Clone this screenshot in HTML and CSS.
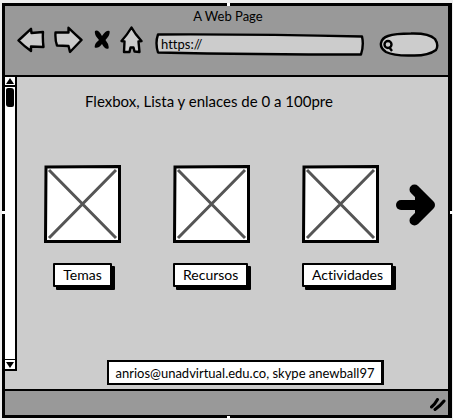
FILE: index.html
```html
<!DOCTYPE html>
<html lang="es">
<head>
<meta charset="utf-8">
<title>A Web Page</title>
<link rel="stylesheet" href="styles.css">
</head>
<body>
<div class="window">
  <header class="chrome">
    <div class="title">A Web Page</div>
    <div class="toolbar">
      <nav class="tools">
        <button class="tool" aria-label="Back"><svg width="28" height="26" viewBox="0 0 28 26"><path class="shape" d="M1.5 13.500 L14 1.800 L14.500 6 L26 5 Q25.500 12 26.500 20 L14 19.500 L14 24 Q7 19 1.500 13.500Z"/></svg></button>
        <button class="tool" aria-label="Forward"><svg width="29" height="28" viewBox="0 0 29 28"><path class="shape" d="M1.500 6.500 L14.500 6.500 L14.500 1.800 Q21 8 27.500 14 L16 26 L14.500 20 L3 19.500 Q1 14 1.500 6.500Z"/></svg></button>
        <button class="tool tool-stop" aria-label="Stop"><svg width="17" height="20" viewBox="0 0 17 20"><path d="M1 1 Q4 -1 8 6 Q12 0 15.500 1 Q16.500 5 11.500 10 Q15.500 15 14.500 18.500 Q11 20 8 14 Q4 19 .8 17.500 Q0 14 5 10 Q0 5 1 1Z"/></svg></button>
        <button class="tool" aria-label="Home"><svg width="23" height="28" viewBox="0 0 23 28"><path class="shape" d="M1.500 15 Q7 9 11.500 1.500 Q15 8 21.500 15 L18.500 15.500 L19.500 26 L14.500 25.500 L13.500 21.500 L10.500 21.500 L9.500 26 L4 26 L4.500 15.500Z"/></svg></button>
      </nav>
      <label class="address"><svg class="sketch" viewBox="0 0 210 23" preserveAspectRatio="none"><path class="shape" d="M3 1.500 Q100 1 207 3.500 Q209 12 206 21.500 Q100 21.500 3 19.500 Q0 10 3 1.500Z"/></svg><input class="address-input" type="text" value="https://" aria-label="Address"></label>
      <label class="search"><svg class="sketch" viewBox="0 0 60 25" preserveAspectRatio="none"><path class="shape" d="M9 4 Q16 1.500 32 1.500 Q50 1 56 7 Q60 13 57 18 Q49 24 33 23.500 Q15 24 7 20 Q1 16 2 11 Q3 6 9 4Z"/><g class="lens"><circle cx="9" cy="12.500" r="3.500"/><path d="M10 15 L13 19"/></g></svg><input class="search-input" type="search" aria-label="Search"></label>
    </div>
  </header>
  <div class="viewport">
    <div class="scrollbar">
      <button class="scroll-button" aria-label="Scroll up"><svg width="8" height="6" viewBox="0 0 8 6"><path d="M4 0 L8 6 H0Z"/></svg></button>
      <div class="track"><div class="thumb"></div></div>
      <button class="scroll-button scroll-down" aria-label="Scroll down"><svg width="8" height="6" viewBox="0 0 8 6"><path d="M0 0 H8 L4 6Z"/></svg></button>
    </div>
    <main class="page">
      <h1 class="heading">Flexbox, Lista y enlaces de 0 a 100pre</h1>
      <div class="gallery">
        <ul class="cards">
          <li class="card card-centered"><svg class="picture" viewBox="0 0 77 78"><path class="frame" d="M2 2 L75.500 1.500 V76.500 H1.500Z"/><path class="cross" d="M5 5 L72 73 M72 5 L5 73"/></svg><a class="label" href="#temas">Temas</a></li>
          <li class="card"><svg class="picture" viewBox="0 0 77 78"><path class="frame" d="M2 2 L75.500 1.500 V76.500 H1.500Z"/><path class="cross" d="M5 5 L72 73 M72 5 L5 73"/></svg><a class="label" href="#recursos">Recursos</a></li>
          <li class="card"><svg class="picture" viewBox="0 0 77 78"><path class="frame" d="M2 2 L75.500 1.500 V76.500 H1.500Z"/><path class="cross" d="M5 5 L72 73 M72 5 L5 73"/></svg><a class="label" href="#actividades">Actividades</a></li>
        </ul>
        <button class="next" aria-label="Siguiente"><svg width="40" height="42" viewBox="0 0 40 42"><path class="next-shaft" d="M5 21 H32"/><path class="next-head" d="M18.500 5.500 L34 21 L18.500 36.500"/><path d="M19 12 L34 21 L19 30Z"/></svg></button>
      </div>
      <footer class="contact">anrios@unadvirtual.edu.co, skype anewball97</footer>
    </main>
  </div>
  <div class="status"><svg width="16" height="13" viewBox="0 0 16 13"><path class="grip" d="M1.500 9 Q5 6 7.500 1.500 M5 11.500 Q10 8 14 3"/></svg></div>
  <i class="handle handle-top"></i><i class="handle handle-right"></i><i class="handle handle-bottom"></i><i class="handle handle-left"></i>
</div>
</body>
</html>
```
FILE: styles.css
```css
* { box-sizing: border-box; }
body {
  margin: 0;
  padding: 3px 1px 2px 2px;
  min-height: 100vh;
  display: flex;
  background: #eee;
  color: #000;
  font: 13px/16px Lato, "Noto Sans", sans-serif;
  font-variant-ligatures: none;
}
svg { display: block; }
button { padding: 0; border: 0; background: none; }
.window {
  position: relative;
  flex: 1;
  min-width: 0;
  display: flex;
  flex-direction: column;
  border: 3px solid #000;
  border-right-width: 4px;
  background: #ccc;
}
.chrome {
  padding: 2px 9px 19px 12px;
  border-bottom: 2px solid #000;
  background: #999;
}
.title { text-align: center; }
.toolbar { display: flex; align-items: center; height: 32px; }
.tools { display: flex; align-items: center; gap: 9px; }
.tool-stop { margin-left: 2px; }
.shape { fill: #ccc; stroke: #000; stroke-width: 2.4; stroke-linejoin: round; }
.address, .search { position: relative; display: flex; }
.address { flex: 1; min-width: 0; height: 23px; margin: 8px 14px 0 12px; }
.search { width: 60px; height: 25px; margin-top: 8px; }
.sketch { position: absolute; inset: 0; width: 100%; height: 100%; }
.address-input, .search-input {
  position: relative;
  width: 100%;
  min-width: 0;
  border: 0;
  padding: 0 6px;
  background: none;
  font: inherit;
  appearance: none;
}
.search-input { padding-left: 20px; }
.lens { fill: none; stroke: #000; stroke-width: 2.4; }
.viewport { flex: 1; display: flex; }
.scrollbar {
  width: 10px;
  margin-bottom: 18px;
  display: flex;
  flex-direction: column;
  border-right: 2px solid #000;
  border-bottom: 2px solid #000;
  box-sizing: content-box;
  background: #fff;
}
.scroll-button {
  height: 10px;
  display: flex;
  align-items: center;
  justify-content: center;
  border-bottom: 2px solid #000;
}
.scroll-down { border-bottom: 0; border-top: 1px solid #000; }
.track { flex: 1; padding: 1px; }
.thumb { width: 8px; height: 19px; border-radius: 2px 3px 2px 3px; background: #000; }
.page { flex: 1; min-width: 0; display: flex; flex-direction: column; }
.heading {
  margin: 14px 0 0 68px;
  font-size: 15px;
  line-height: 20px;
  font-weight: 400;
}
.gallery { display: flex; justify-content: space-between; margin: 54px 12px 0 27px; }
.cards { display: flex; gap: 52px; margin: 0; padding: 0; list-style: none; }
.card { width: 77px; display: flex; flex-direction: column; align-items: flex-start; gap: 20px; }
.card-centered { align-items: center; }
.picture { width: 77px; height: 78px; }
.frame { fill: #fff; stroke: #000; stroke-width: 3; }
.cross { stroke: #555; stroke-width: 3; }
.label {
  padding: 2px 8px;
  border: 2px solid #000;
  border-radius: 1px;
  background: #fff;
  box-shadow: 3px 3px #000;
  color: inherit;
  font-size: 14px;
  text-decoration: none;
  white-space: nowrap;
}
.next { align-self: flex-start; margin-top: 19px; }
.next-shaft, .next-head { fill: none; stroke: #000; stroke-width: 10; stroke-linecap: round; stroke-linejoin: round; }
.contact {
  align-self: center;
  margin: auto 0 4px 26px;
  padding: 3px 6px 2px;
  border: 2px solid #000;
  border-right-width: 3px;
  background: #fff;
  white-space: nowrap;
}
.status {
  height: 26px;
  padding: 7px 2px 0;
  display: flex;
  justify-content: flex-end;
  border-top: 2px solid #000;
  background: #999;
}
.grip { fill: none; stroke: #000; stroke-width: 3; stroke-linecap: round; }
.handle { position: absolute; width: 3px; height: 3px; background: #fff; }
.handle-top { top: -3px; left: 50%; }
.handle-bottom { bottom: -4px; left: 50%; }
.handle-left { left: -3px; top: 50%; }
.handle-right { right: -5px; top: 50%; }
```
